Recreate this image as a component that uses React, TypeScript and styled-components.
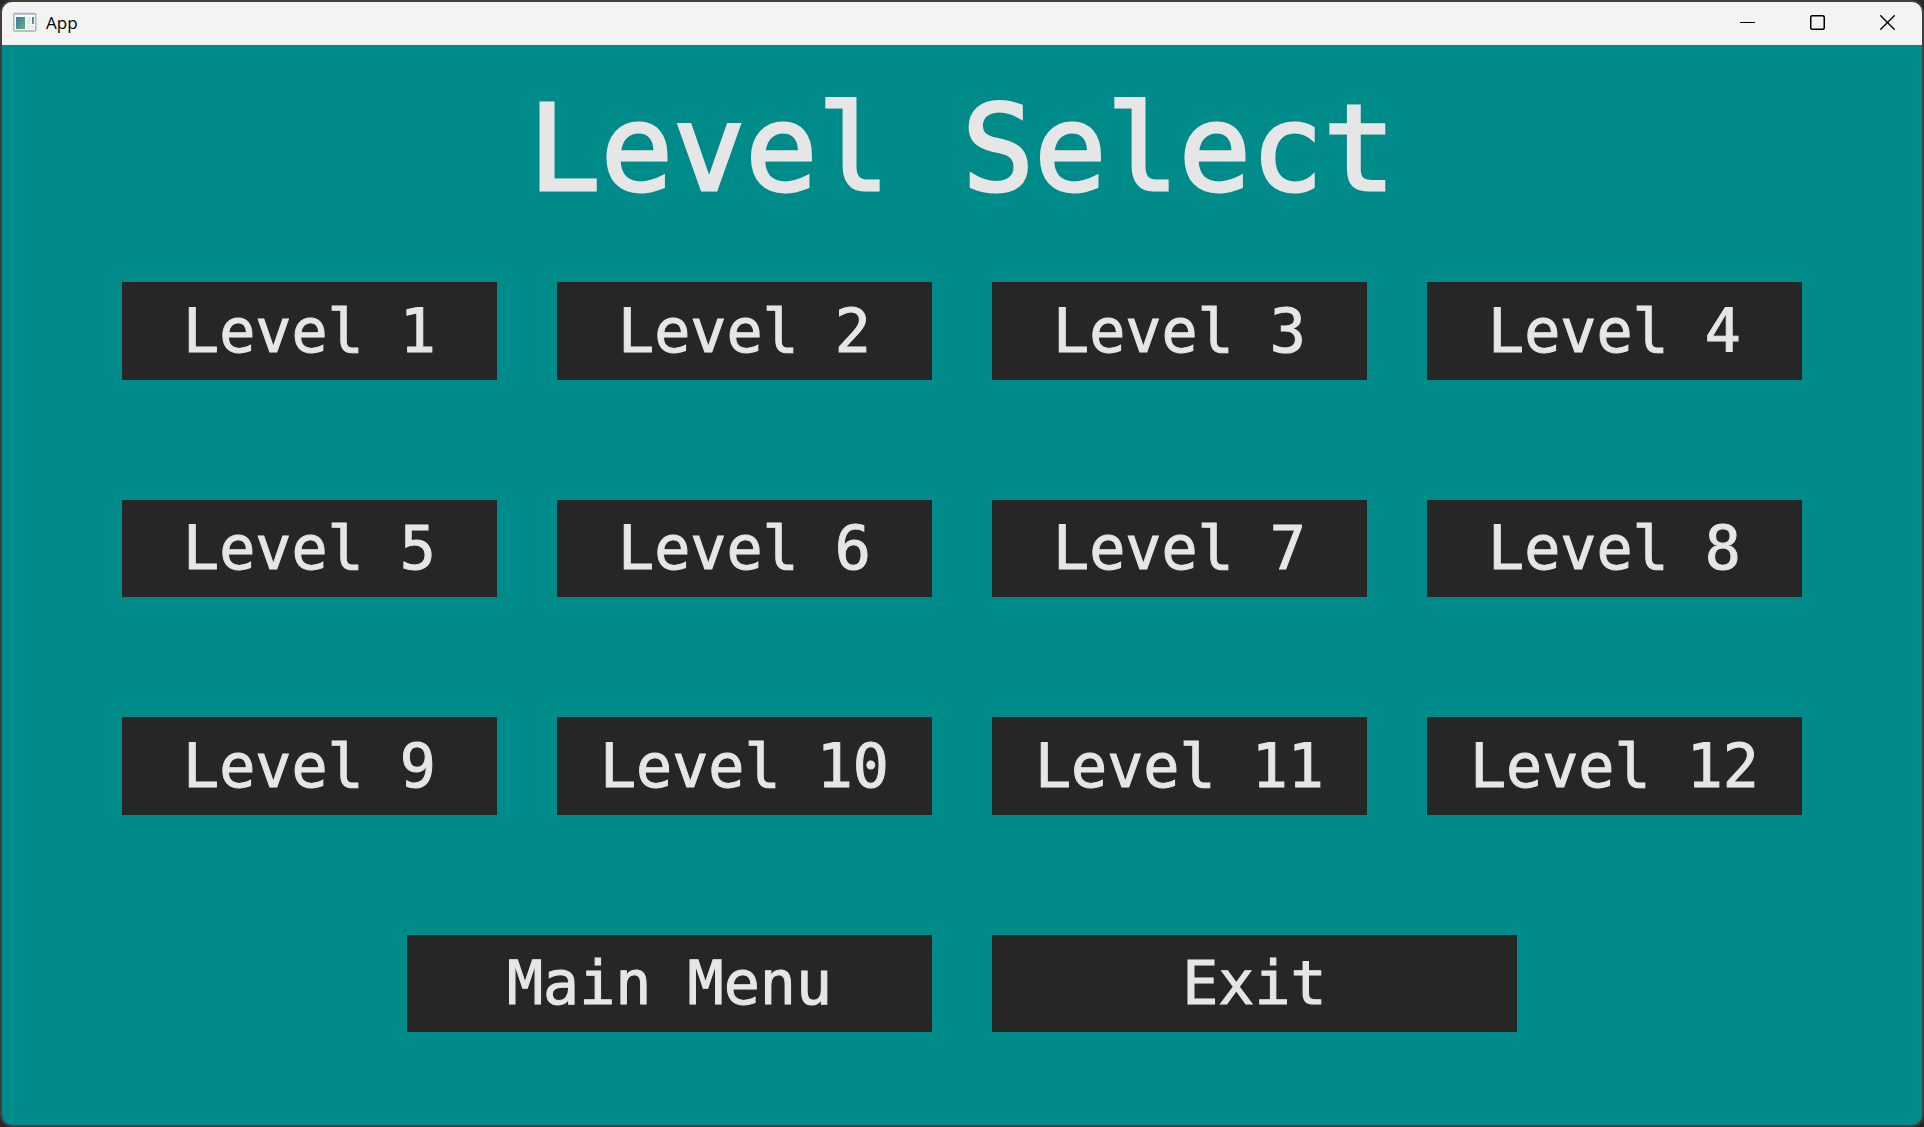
import React from "react";
import styled, { createGlobalStyle } from "styled-components";

const GlobalStyle = createGlobalStyle`
  *, *::before, *::after { box-sizing: border-box; }
  body { margin: 0; background: #262626; }
`;

const Desktop = styled.div`
  display: flex;
  min-height: 100vh;
  background: #262626;
`;

const Window = styled.div`
  flex: 1;
  display: flex;
  flex-direction: column;
  overflow: hidden;
  border: 2px solid #3f3f3f;
  border-radius: 12px;
  background: #008b8b;
`;

const TitleBar = styled.header`
  display: flex;
  align-items: center;
  height: 43px;
  padding: 0 0 2px 10px;
  background: #f3f3f3;
  color: #000000;
  font-family: "Open Sans", "Noto Sans", sans-serif;
  font-size: 17px;
  line-height: 24px;
`;

const AppName = styled.span`
  flex: 1;
  padding-left: 9px;
`;

const WindowControl = styled.button`
  display: grid;
  place-items: center;
  width: 70px;
  height: 41px;
  padding: 0;
  border: 0;
  background: transparent;
  color: #000000;
`;

const Screen = styled.main`
  flex: 1;
  display: flex;
  flex-direction: column;
  padding: 32px 120px 93px;
  color: #e6e6e6;
  font-family: "DejaVu Sans Mono", "Liberation Mono", monospace;
`;

const Title = styled.h1`
  margin: 0 0 61px;
  font-size: 120px;
  font-weight: 400;
  line-height: 144px;
  text-align: center;
  -webkit-text-stroke: 3px currentColor;
`;

const Menu = styled.nav`
  flex: 1;
  display: grid;
  grid-template-columns: repeat(4, 1fr);
  grid-template-rows: repeat(4, 1fr);
  gap: 120px 60px;
`;

const Actions = styled.div`
  grid-column: 1 / -1;
  justify-self: center;
  display: grid;
  grid-template-columns: 1fr 1fr;
  gap: 60px;
  width: 100%;
  max-width: 1110px;
`;

const MenuButton = styled.button`
  padding: 0;
  border: 0;
  background: #262626;
  color: inherit;
  font: inherit;
  font-size: 60px;
  line-height: 72px;
  white-space: nowrap;
  cursor: pointer;
  -webkit-text-stroke: 1px currentColor;
`;

const AppIcon = () => (
  <svg width="25" height="21" viewBox="0 0 25 21" aria-hidden="true">
    <defs>
      <linearGradient id="pane" x1="0" y1="0" x2="1" y2="1">
        <stop offset="0" stopColor="#3d75a8" />
        <stop offset="1" stopColor="#5cb774" />
      </linearGradient>
    </defs>
    <rect x="1.8" y="1.5" width="22" height="17.5" rx="1" fill="#f8f9fa" stroke="#a9afb9" strokeWidth="1.4" />
    <path d="M2.5 2.5h20.5" stroke="#c3c9d2" />
    <rect x="4" y="5" width="9" height="12" fill="url(#pane)" />
    <rect x="15" y="5" width="4" height="7" fill="#e8ebea" />
    <rect x="15" y="13" width="7" height="4" fill="#e8ebea" />
    <rect x="20" y="5" width="2" height="7" fill="url(#pane)" />
  </svg>
);

const MinimizeIcon = () => (
  <svg width="15" height="15" viewBox="0 0 15 15" aria-hidden="true">
    <path d="M0 7.5h15" stroke="currentColor" />
  </svg>
);

const MaximizeIcon = () => (
  <svg width="15" height="15" viewBox="0 0 15 15" fill="none" aria-hidden="true">
    <rect x="0.75" y="0.75" width="13.5" height="13.5" rx="1.5" stroke="currentColor" strokeWidth="1.5" />
  </svg>
);

const CloseIcon = () => (
  <svg width="15" height="15" viewBox="0 0 15 15" aria-hidden="true">
    <path d="M0.3 0.3l14.4 14.4M14.7 0.3L0.3 14.7" stroke="currentColor" strokeWidth="1.4" />
  </svg>
);

const levels = Array.from({ length: 12 }, (_, i) => i + 1);

export default function App() {
  return (
    <>
      <GlobalStyle />
      <Desktop>
        <Window>
          <TitleBar>
            <AppIcon />
            <AppName>App</AppName>
            <WindowControl type="button" aria-label="Minimize">
              <MinimizeIcon />
            </WindowControl>
            <WindowControl type="button" aria-label="Maximize">
              <MaximizeIcon />
            </WindowControl>
            <WindowControl type="button" aria-label="Close">
              <CloseIcon />
            </WindowControl>
          </TitleBar>
          <Screen>
            <Title>Level Select</Title>
            <Menu>
              {levels.map((level) => (
                <MenuButton key={level} type="button">
                  Level {level}
                </MenuButton>
              ))}
              <Actions>
                <MenuButton type="button">Main Menu</MenuButton>
                <MenuButton type="button">Exit</MenuButton>
              </Actions>
            </Menu>
          </Screen>
        </Window>
      </Desktop>
    </>
  );
}
